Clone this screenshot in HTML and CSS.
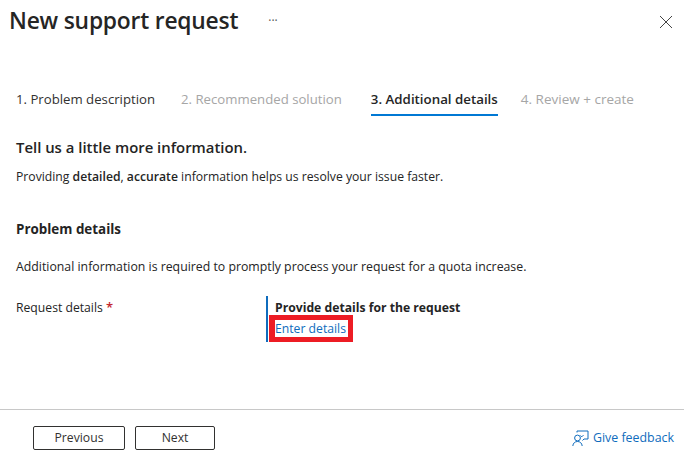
FILE: index.html
```html
<!DOCTYPE html>
<html lang="en">
<head>
<meta charset="utf-8">
<title>New support request</title>
<link rel="stylesheet" href="styles.css">
</head>
<body>
<div class="page">
  <header class="header">
    <h1 class="title">New support request</h1>
    <span class="more">···</span>
    <svg class="close" width="14" height="14" viewBox="0 0 14 14" aria-label="Close"><path d="M1 1l12 12M13 1L1 13" fill="none" stroke="#444" stroke-width="1"/></svg>
  </header>
  <nav class="tabs">
    <span class="tab tab-done">1. Problem description</span>
    <span class="tab tab-off">2. Recommended solution</span>
    <span class="tab tab-on">3. Additional details</span>
    <span class="tab tab-off tab-last">4. Review + create</span>
  </nav>
  <main class="content">
    <h2 class="lead">Tell us a little more information.</h2>
    <p class="text">Providing <b class="semi">detailed</b>, <b class="semi">accurate</b> information helps us resolve your issue faster.</p>
    <h3 class="section">Problem details</h3>
    <p class="text text-wide">Additional information is required to promptly process your request for a quota increase.</p>
    <div class="row">
      <div class="label">Request details <span class="req">*</span></div>
      <div class="callout">
        <div class="callout-title">Provide details for the request</div>
        <a class="enter" href="#">Enter details</a>
      </div>
    </div>
  </main>
  <footer class="footer">
    <button class="btn btn-prev">Previous</button>
    <button class="btn btn-next">Next</button>
    <a class="feedback" href="#">
      <svg class="feedback-icon" width="17" height="17" viewBox="0 0 17 17" fill="none" stroke="#0f6cbd" stroke-width="1"><circle cx="5.500" cy="8" r="2.900"/><path d="M.8 16c.3-2.900 2.200-4.500 4.700-4.500s4.400 1.600 4.700 4.500"/><path d="M5 2.500V1h11v8h-4l-1.500 1.500"/><path d="M8.500 5.500l1.300 1.300 1.700-1.700"/></svg>
      <span>Give feedback</span>
    </a>
  </footer>
</div>
</body>
</html>
```
FILE: styles.css
```css
* { box-sizing: border-box; }
html, body { margin: 0; padding: 0; }
body { background: #fff; font-family: "Open Sans", "Noto Sans", sans-serif; color: #242424; font-size: 12.2px; }
.page { width: 684px; height: 465px; display: flex; flex-direction: column; overflow: hidden; }
.header { height: 38px; padding: 3px 11px 0 9px; display: flex; align-items: center; }
.title { margin: 0; font-size: 22.8px; font-weight: 600; line-height: 34px; letter-spacing: -0.2px; color: #252525; }
.more { margin-left: 30px; font-size: 12px; color: #555; }
.close { margin-left: auto; margin-top: 2px; }
.tabs { margin: 48px 0 0 16px; display: flex; gap: 26px; height: 31px; font-size: 13.2px; }
.tab { height: 30px; line-height: 27px; white-space: nowrap; }
.tab-done { color: #323130; }
.tab-off { color: #a6a6a6; }
.tab-on { font-weight: 600; font-size: 13.3px; border-bottom: 2px solid #0078d4; color: #252525; margin-left: 3px; }
.tab-last { margin-left: -3px; font-size: 13.5px; }
.content { padding: 0 16px; flex: 1; }
.lead { margin: 20px 0 0; font-size: 14.9px; line-height: 20px; font-weight: 600; }
.text { margin: 0; line-height: 18px; }
.text-wide { font-size: 12.3px; }
.lead + .text { margin-top: 11px; }
.semi { font-weight: 600; }
.section { margin: 34px 0 20px; font-size: 13.4px; line-height: 18px; font-weight: 700; }
.row { margin-top: 20px; display: flex; }
.label { width: 250px; line-height: 18px; padding-top: 2px; }
.req { color: #c4262e; font-size: 13px; font-weight: 600; }
.callout { border-left: 2px solid #0f6cbd; padding: 3px 0 0 7px; height: 46px; width: 300px; }
.callout-title { font-weight: 700; line-height: 17px; }
.enter { display: inline-block; color: #0f6cbd; text-decoration: none; line-height: 17px; margin: -1px 0 0 -6px; padding: 0 2px 0 0; border-style: solid; border-color: #ed1c24; border-width: 5px 5px 5px 6px; }
.footer { height: 56px; border-top: 1px solid #c8c8c8; display: flex; align-items: center; padding: 0 10px 0 33px; }
.btn { height: 24px; background: #fff; border: 1px solid #323130; border-radius: 2px; font: inherit; color: #323130; padding: 0; }
.btn-prev { width: 92px; }
.btn-next { width: 80px; margin-left: 10px; }
.feedback { margin-left: auto; display: flex; align-items: center; gap: 4px; color: #0f6cbd; text-decoration: none; font-size: 12.4px; }
.feedback-icon { margin-top: 2px; }
```
